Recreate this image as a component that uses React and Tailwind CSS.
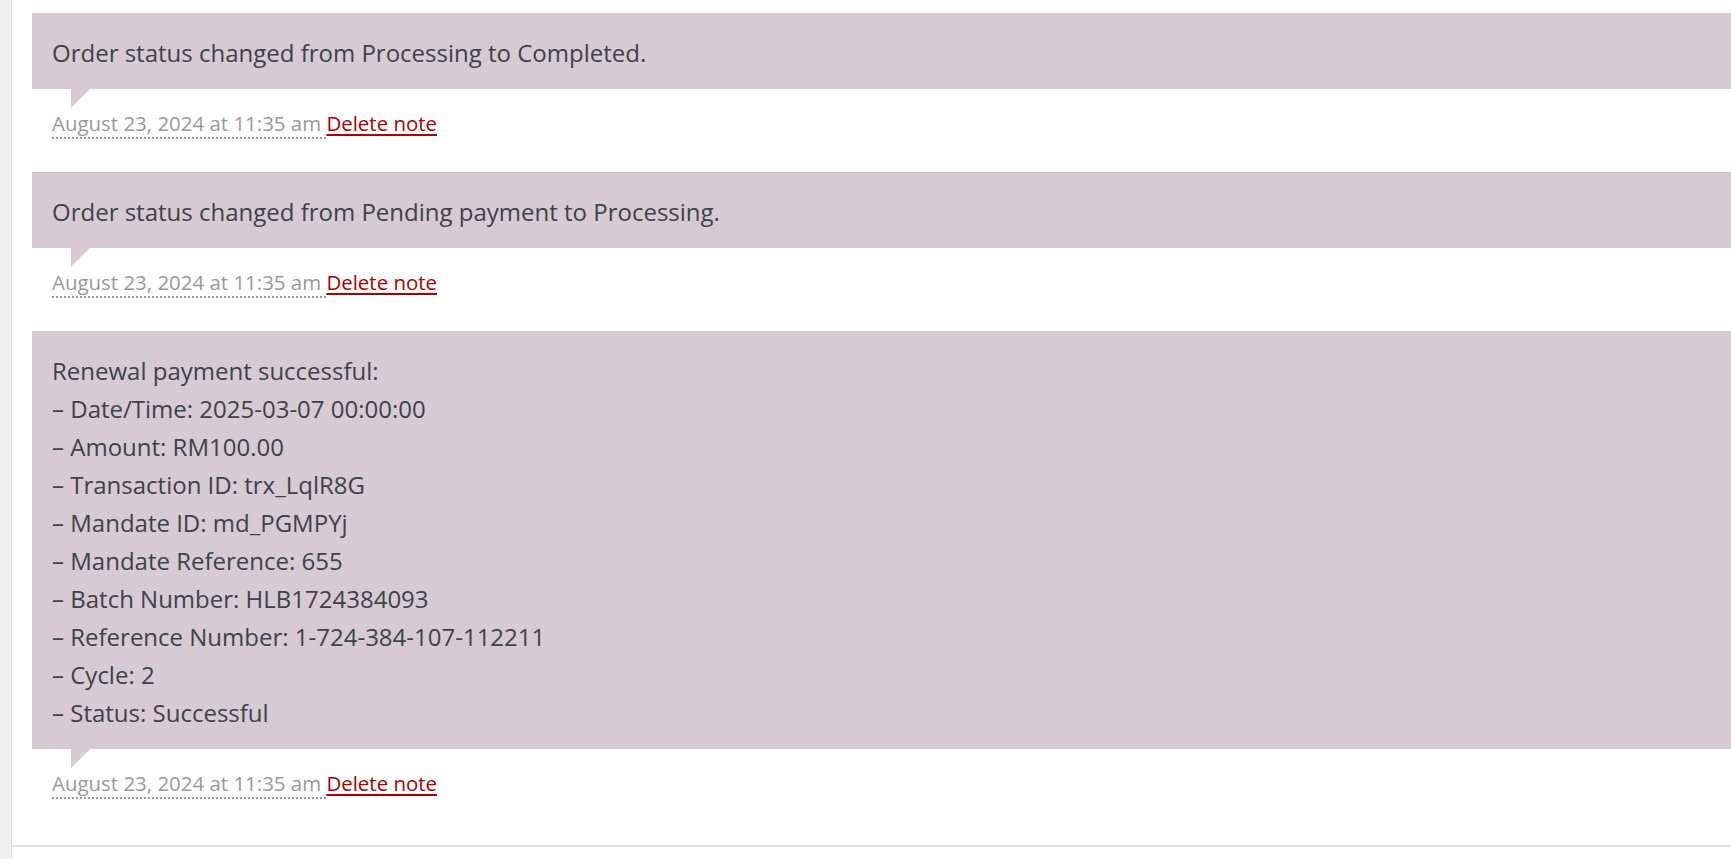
import React from "react";

const notes = [
  { lines: ["Order status changed from Processing to Completed."] },
  { lines: ["Order status changed from Pending payment to Processing."] },
  {
    lines: [
      "Renewal payment successful:",
      "– Date/Time: 2025-03-07 00:00:00",
      "– Amount: RM100.00",
      "– Transaction ID: trx_LqlR8G",
      "– Mandate ID: md_PGMPYj",
      "– Mandate Reference: 655",
      "– Batch Number: HLB1724384093",
      "– Reference Number: 1-724-384-107-112211",
      "– Cycle: 2",
      "– Status: Successful",
    ],
  },
];

function Note({ lines }) {
  return (
    <li className="list-none">
      <div className="relative bg-[#d7cad2] px-[20px] pt-[21px] pb-[17px] text-[24px] leading-[38px] text-[#3c434a]">
        {lines.map((l, i) => (
          <p key={i} className="m-0 whitespace-nowrap">
            {l}
          </p>
        ))}
        <span className="absolute left-[39px] bottom-[-19px] h-0 w-0 border-t-[19px] border-r-[19px] border-t-[#d7cad2] border-r-transparent" />
      </div>
      <p className="m-0 px-[20px] pt-[19px] pb-[34px] text-[20.45px] leading-[30px] text-[#999999] whitespace-nowrap">
        <abbr className="no-underline border-b-2 border-dotted border-[#999999] cursor-help" title="August 23, 2024 at 11:35 am">
          August 23, 2024 at 11:35 am{" "}
        </abbr>
        <a href="#" className="text-[#aa0000] underline decoration-[1.5px] underline-offset-[3px]">
          Delete note
        </a>
      </p>
    </li>
  );
}

export default function App() {
  return (
    <div
      className="flex h-[859px] w-full overflow-hidden bg-white"
      style={{ fontFamily: '"Open Sans", "Noto Sans", sans-serif' }}
    >
      <div className="w-[12px] shrink-0 border-r border-[#dcdcde] bg-[#f0f0f1]" />
      <div className="flex min-w-0 flex-1 flex-col">
        <ul className="m-0 pl-[20px] pt-[13px] pb-[13px]">
          {notes.map((n, i) => (
            <Note key={i} lines={n.lines} />
          ))}
        </ul>
        <div className="h-[2px] bg-[#e2e2e2]" />
      </div>
    </div>
  );
}
